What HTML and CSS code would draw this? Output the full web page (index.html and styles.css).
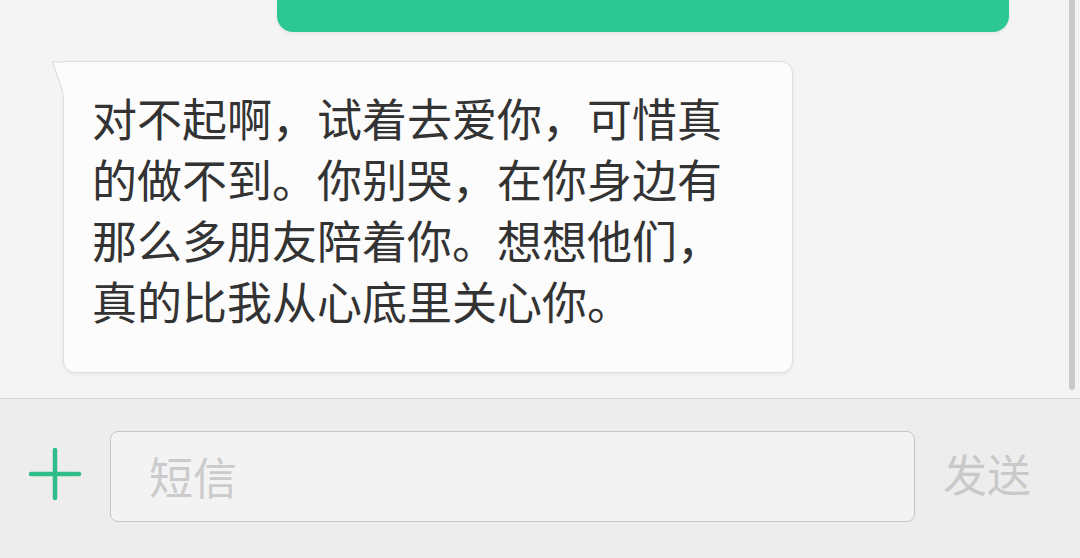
FILE: index.html
```html
<!DOCTYPE html>
<html lang="zh">
<head>
<meta charset="utf-8">
<link rel="stylesheet" href="styles.css">
</head>
<body>
<div class="screen">
  <div class="messages">
    <div class="bubble-out"></div>
    <div class="bubble-in">
      <svg class="tail" width="14" height="36" viewBox="0 0 14 36">
        <path d="M13 1 L1.5 1 Q1 1 2 2.5 L13 34" fill="#fcfcfc" stroke="#dedede" stroke-width="1.2" stroke-linejoin="round"/>
        <rect x="12.4" y="1.6" width="2" height="34" fill="#fcfcfc"/>
      </svg>
      <p class="text">对不起啊，试着去爱你，可惜真的做不到。你别哭，在你身边有那么多朋友陪着你。想想他们，真的比我从心底里关心你。</p>
    </div>
    <div class="scrollbar"></div>
  </div>
  <div class="composer">
    <div class="plus">
      <svg width="56" height="56" viewBox="0 0 56 56">
        <path d="M28 4 V52 M4 28 H52" stroke="#2fbc89" stroke-width="4.5" stroke-linecap="round"/>
      </svg>
    </div>
    <div class="input"><span class="placeholder">短信</span></div>
    <div class="send">发送</div>
  </div>
</div>
</body>
</html>
```
FILE: styles.css
```css
html, body {
  margin: 0;
  padding: 0;
}
body {
  font-family: "Noto Sans CJK SC", "Noto Sans", sans-serif;
  background: #f4f4f4;
}
.screen {
  width: 1080px;
  height: 558px;
  display: flex;
  flex-direction: column;
  overflow: hidden;
}
.messages {
  position: relative;
  height: 398px;
  background: #f4f4f4;
  flex: none;
}
.bubble-out {
  margin-left: 277px;
  width: 732px;
  height: 32px;
  background: #2dc793;
  border-radius: 0 0 16px 16px;
  box-shadow: 0 2px 4px rgba(0,0,0,0.06);
}
.bubble-in {
  position: relative;
  margin-top: 29px;
  margin-left: 63px;
  width: 730px;
  height: 312px;
  box-sizing: border-box;
  background: #fcfcfc;
  border: 1px solid #dedede;
  border-radius: 0 12px 12px 12px;
  box-shadow: 0 2px 4px rgba(0,0,0,0.05);
  padding: 25px 60px 0 28px;
}
.tail {
  position: absolute;
  left: -13px;
  top: -1px;
}
.text {
  margin: 0;
  font-size: 45px;
  line-height: 61px;
  color: #333333;
}
.scrollbar {
  position: absolute;
  left: 1069px;
  top: 0;
  width: 6px;
  height: 390px;
  background: #c9c9c9;
  border-radius: 0 0 3px 3px;
}
.composer {
  flex: 1;
  background: #ededed;
  border-top: 1px solid #d4d4d4;
  display: flex;
  align-items: flex-start;
  padding-top: 32px;
  box-sizing: border-box;
}
.plus {
  width: 110px;
  height: 91px;
  display: flex;
  align-items: center;
  justify-content: center;
}
.plus svg {
  margin-top: -5px;
}
.input {
  width: 805px;
  height: 91px;
  box-sizing: border-box;
  border: 1px solid #c6c6c6;
  border-radius: 8px;
  background: #f3f3f3;
  display: flex;
  align-items: center;
  padding-left: 38px;
}
.placeholder {
  font-size: 44px;
  color: #cbcbcb;
  line-height: 1;
  margin-top: -2px;
}
.send {
  height: 91px;
  display: flex;
  align-items: center;
  padding-left: 28px;
  font-size: 44px;
  color: #c9c9c9;
  line-height: 1;
  margin-top: -4px;
}
```
